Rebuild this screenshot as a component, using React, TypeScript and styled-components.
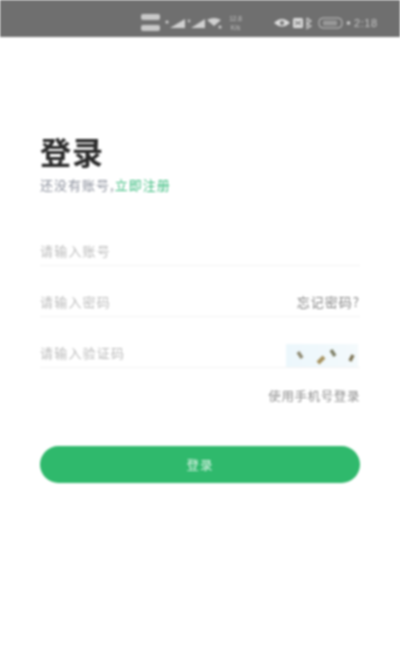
import React from "react";
import styled, { createGlobalStyle } from "styled-components";

const GlobalStyle = createGlobalStyle`
  html, body {
    margin: 0;
    padding: 0;
    background: #fff;
  }
  body {
    font-family: "Noto Sans CJK SC", "Noto Sans", sans-serif;
  }
`;

const Page = styled.div`
  width: 400px;
  height: 660px;
  overflow: hidden;
  display: flex;
  flex-direction: column;
  background: #fff;
  filter: blur(0.8px);
`;

const StatusBar = styled.div`
  height: 37px;
  flex: none;
  background: #6f6f6f;
  display: flex;
  align-items: center;
  justify-content: flex-end;
  gap: 3px;
  padding: 8px 22px 0 0;
  box-sizing: border-box;
  color: #d8d8d8;
`;

const SimStack = styled.div`
  display: flex;
  flex-direction: column;
  gap: 5px;
  margin-right: 2px;
`;

const Sim = styled.div`
  width: 19px;
  height: 6px;
  border-radius: 2px;
  background: #c8c8c8;
`;

const Speed = styled.div`
  width: 15px;
  font-family: "Liberation Sans", sans-serif;
  font-size: 6.5px;
  line-height: 9px;
  text-align: center;
  color: #c4c4c4;
  margin: 0 28px 0 2px;
`;

const Clock = styled.span`
  width: 24px;
  font-family: "Liberation Sans", sans-serif;
  font-size: 11px;
  letter-spacing: 0.6px;
  color: #c4c4c4;
  white-space: nowrap;
`;

const Content = styled.main`
  flex: 1;
  display: flex;
  flex-direction: column;
  padding: 0 40px;
`;

const Title = styled.h1`
  margin: 95px 0 0;
  font-size: 31px;
  line-height: 38px;
  font-weight: 700;
  letter-spacing: 1px;
  color: #2b2b2b;
`;

const Subtitle = styled.p`
  margin: 7px 0 0;
  font-size: 13px;
  line-height: 16px;
  letter-spacing: 1px;
  color: #8d929e;
  white-space: nowrap;
`;

const RegisterLink = styled.a`
  color: #3dbd80;
`;

const Fields = styled.div`
  margin-top: 22px;
  display: flex;
  flex-direction: column;
`;

const Field = styled.div`
  height: 51px;
  box-sizing: border-box;
  border-bottom: 1px solid #f3f3f3;
  display: flex;
  align-items: center;
  justify-content: space-between;
  padding-top: 20px;
`;

const Placeholder = styled.span`
  font-size: 13px;
  line-height: 16px;
  letter-spacing: 1.2px;
  color: #bcbcbc;
  position: relative;
  top: 1px;
`;

const Forgot = styled.a`
  font-size: 13px;
  line-height: 16px;
  letter-spacing: 1px;
  color: #858585;
  position: relative;
  top: 1px;
  white-space: nowrap;
`;

const Captcha = styled.div`
  width: 72px;
  height: 23px;
  margin: 0 2px 0 0;
  background: linear-gradient(90deg, #ecf7fc, #f4fafc);
  align-self: flex-end;
  display: block;
`;

const PhoneLogin = styled.a`
  align-self: flex-end;
  margin-top: 20px;
  font-size: 12.5px;
  line-height: 16px;
  letter-spacing: 0.6px;
  color: #8f8f8f;
  white-space: nowrap;
`;

const LoginButton = styled.button`
  margin-top: 42px;
  height: 37px;
  width: 100%;
  border: none;
  border-radius: 19px;
  background: #2fb96c;
  color: #dff3e8;
  font-family: inherit;
  font-size: 12.5px;
  letter-spacing: 1px;
`;

const App: React.FC = () => (
  <>
    <GlobalStyle />
    <Page>
      <StatusBar>
        <SimStack>
          <Sim />
          <Sim />
        </SimStack>
        <svg width="58" height="14" viewBox="0 0 58 14">
          <circle cx="2" cy="6" r="1.6" fill="#d0d0d0" />
          <path d="M5 12 L20 3 V12Z" fill="#d0d0d0" />
          <circle cx="24" cy="5" r="1.4" fill="#c0c0c0" />
          <path d="M26 12 L40 3 V12Z" fill="#d0d0d0" />
          <path d="M42 4 Q49 0 56 4 L49 10Z" fill="#d0d0d0" />
          <circle cx="55" cy="11" r="1.6" fill="#d0d0d0" />
        </svg>
        <Speed>
          12.8
          <br />
          K/s
        </Speed>
        <svg width="69" height="14" viewBox="0 0 69 14">
          <path d="M0 7 Q8 -1 16 7 Q8 14 0 7Z" fill="#dcdcdc" />
          <circle cx="8" cy="7" r="2.2" fill="#7d7d7d" />
          <rect x="19" y="2" width="10" height="10" rx="1.5" fill="#dcdcdc" />
          <path d="M21 5 L27 9 M27 5 L21 9" stroke="#7d7d7d" strokeWidth="1.2" />
          <path d="M33 2 L37 5 L33 8 L37 10 L33 12.5 V2" fill="none" stroke="#d0d0d0" strokeWidth="1.2" />
          <rect x="45" y="2" width="23" height="10" rx="4" fill="none" stroke="#c4c4c4" strokeWidth="1" />
          <rect x="49" y="4.5" width="14" height="5" rx="1" fill="#999" />
        </svg>
        <svg width="5" height="14" viewBox="0 0 5 14">
          <circle cx="2.5" cy="7" r="1.8" fill="#d0d0d0" />
        </svg>
        <Clock>2:18</Clock>
      </StatusBar>
      <Content>
        <Title>登录</Title>
        <Subtitle>
          还没有账号,<RegisterLink>立即注册</RegisterLink>
        </Subtitle>
        <Fields>
          <Field>
            <Placeholder>请输入账号</Placeholder>
          </Field>
          <Field>
            <Placeholder>请输入密码</Placeholder>
            <Forgot>忘记密码?</Forgot>
          </Field>
          <Field>
            <Placeholder>请输入验证码</Placeholder>
            <Captcha>
              <svg width="72" height="23" viewBox="0 0 72 23">
                <path d="M12 8 L16 14" stroke="#8f8a72" strokeWidth="3.5" />
                <path d="M32 19 L38 13" stroke="#a8935f" strokeWidth="4" />
                <path d="M45 6 L49 12" stroke="#7f8068" strokeWidth="3.5" />
                <path d="M64 17 L67 11" stroke="#7f7657" strokeWidth="3.5" />
              </svg>
            </Captcha>
          </Field>
          <PhoneLogin>使用手机号登录</PhoneLogin>
        </Fields>
        <LoginButton>登录</LoginButton>
      </Content>
    </Page>
  </>
);

export default App;
